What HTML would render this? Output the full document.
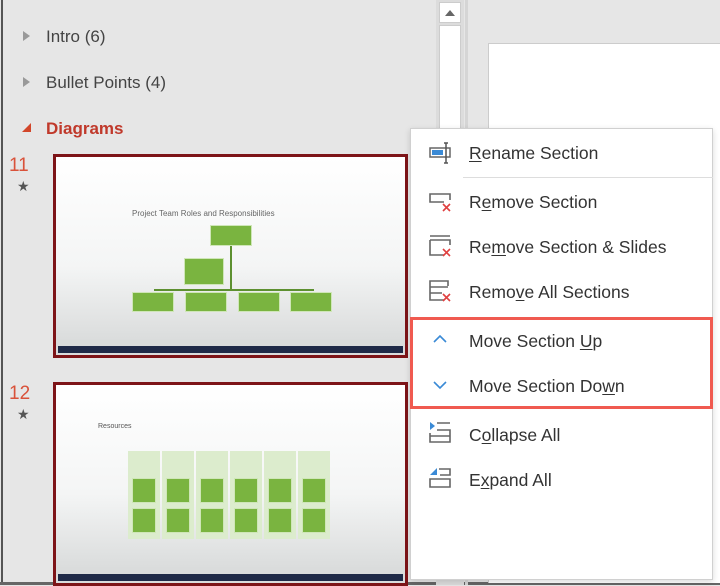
<!DOCTYPE html>
<html><head><style>
*{margin:0;padding:0;box-sizing:border-box}
body{width:720px;height:585px;overflow:hidden;background:#e6e6e6;font-family:"Liberation Sans",sans-serif;position:relative}
.abs{position:absolute}
.sec{position:absolute;left:46px;font-size:17px;color:#444}
.tri{position:absolute;left:23px;width:0;height:0;border-top:5px solid transparent;border-bottom:5px solid transparent;border-left:7px solid #999}
.thumb{position:absolute;left:53px;width:355px;height:204px;border:3px solid #7d1418;background:linear-gradient(#fff 0%,#f4f5f5 55%,#dadcdc 93%)}
.bar{position:absolute;left:2px;right:2px;bottom:2px;height:7px;background:#1f2a48}
.g{position:absolute;background:#7ab440;border:1px solid #cfe6b8}
.menu{position:absolute;left:410px;top:128px;width:303px;height:452px;background:#fff;border:1px solid #d0d0d0;box-shadow:0 2px 6px rgba(0,0,0,.15)}
.it{position:absolute;left:58px;font-size:17.5px;color:#333}
.ic{position:absolute;left:17px}
u{text-decoration:underline;text-underline-offset:2px}
</style></head><body>
<div class="abs" style="left:1px;top:0;width:2px;height:585px;background:#555"></div>
<div class="abs" style="left:0;top:582px;width:720px;height:3px;background:#666"></div>
<div class="abs" style="left:436px;top:0;width:28px;height:585px;background:#dcdcdc"></div>
<div class="abs" style="left:439px;top:2px;width:22px;height:21px;background:#fff;border:1px solid #ccc"></div>
<div class="abs" style="left:445px;top:10px;border-left:5px solid transparent;border-right:5px solid transparent;border-bottom:6px solid #666"></div>
<div class="abs" style="left:439px;top:25px;width:22px;height:555px;background:#fff;border:1px solid #ccc"></div>
<div class="abs" style="left:465px;top:0;width:3px;height:585px;background:#d5d5d5"></div>
<div class="abs" style="left:488px;top:43px;width:232px;height:540px;background:#fff;border-left:1px solid #ccc;border-top:1px solid #ccc"></div>

<div class="tri" style="top:31px"></div><div class="sec" style="top:27px">Intro (6)</div>
<div class="tri" style="top:77px"></div><div class="sec" style="top:73px">Bullet Points (4)</div>
<div class="abs" style="left:22px;top:123px;border-left:9px solid transparent;border-bottom:9px solid #d2462a"></div>
<div class="sec" style="top:119px;color:#c0392b;font-weight:bold">Diagrams</div>

<div class="abs" style="left:9px;top:155px;font-size:19px;color:#d9523a">11</div>
<div class="abs" style="left:17px;top:178px;font-size:14px;color:#555">★</div>
<div class="abs" style="left:9px;top:383px;font-size:19px;color:#d9523a">12</div>
<div class="abs" style="left:17px;top:406px;font-size:14px;color:#555">★</div>

<div class="thumb" style="top:154px">
 <div class="abs" style="left:76px;top:52px;font-size:8px;color:#666">Project Team Roles and Responsibilities</div>
 <div class="g" style="left:154px;top:68px;width:42px;height:21px"></div>
 <div class="g" style="left:128px;top:101px;width:40px;height:27px"></div>
 <div class="abs" style="left:174px;top:89px;width:2px;height:43px;background:#5d9030"></div>
 <div class="abs" style="left:98px;top:132px;width:160px;height:2px;background:#5d9030"></div>
 <div class="g" style="left:76px;top:135px;width:42px;height:20px"></div>
 <div class="g" style="left:129px;top:135px;width:42px;height:20px"></div>
 <div class="g" style="left:182px;top:135px;width:42px;height:20px"></div>
 <div class="g" style="left:234px;top:135px;width:42px;height:20px"></div>
 <div class="bar"></div>
</div>
<div class="thumb" style="top:382px">
 <div class="abs" style="left:42px;top:38px;font-size:7px;color:#555">Resources</div>
 <div class="abs" style="left:72px;top:66px;width:205px;height:88px">
  <div class="abs" style="left:0;top:0;width:32px;height:88px;background:#dceccd"></div><div class="g" style="left:4px;top:27px;width:24px;height:25px"></div><div class="g" style="left:4px;top:57px;width:24px;height:25px"></div>
  <div class="abs" style="left:34px;top:0;width:32px;height:88px;background:#dceccd"></div><div class="g" style="left:38px;top:27px;width:24px;height:25px"></div><div class="g" style="left:38px;top:57px;width:24px;height:25px"></div>
  <div class="abs" style="left:68px;top:0;width:32px;height:88px;background:#dceccd"></div><div class="g" style="left:72px;top:27px;width:24px;height:25px"></div><div class="g" style="left:72px;top:57px;width:24px;height:25px"></div>
  <div class="abs" style="left:102px;top:0;width:32px;height:88px;background:#dceccd"></div><div class="g" style="left:106px;top:27px;width:24px;height:25px"></div><div class="g" style="left:106px;top:57px;width:24px;height:25px"></div>
  <div class="abs" style="left:136px;top:0;width:32px;height:88px;background:#dceccd"></div><div class="g" style="left:140px;top:27px;width:24px;height:25px"></div><div class="g" style="left:140px;top:57px;width:24px;height:25px"></div>
  <div class="abs" style="left:170px;top:0;width:32px;height:88px;background:#dceccd"></div><div class="g" style="left:174px;top:27px;width:24px;height:25px"></div><div class="g" style="left:174px;top:57px;width:24px;height:25px"></div>
 </div>
 <div class="bar"></div>
</div>

<div class="menu">
 <svg class="ic" style="top:11px" width="26" height="26" viewBox="0 0 26 26"><rect x="2" y="8" width="20" height="9" fill="none" stroke="#666" stroke-width="1.5"/><rect x="4" y="10" width="11" height="5" fill="#3a8ad6"/><path d="M16 3h4M18 3v20M16 23h4" stroke="#555" stroke-width="1.5" fill="none"/></svg>
 <div class="it" style="top:14px"><u>R</u>ename Section</div>
 <div class="abs" style="left:52px;top:48px;width:250px;height:1px;background:#ddd"></div>
 <svg class="ic" style="top:60px" width="26" height="26" viewBox="0 0 26 26"><path d="M16 13H2V5h20v6" fill="none" stroke="#666" stroke-width="1.6"/><path d="M15 15l7 7M22 15l-7 7" stroke="#e04040" stroke-width="1.6"/></svg>
 <div class="it" style="top:63px">R<u>e</u>move Section</div>
 <svg class="ic" style="top:104px" width="26" height="28" viewBox="0 0 26 28"><path d="M2 3h20M2 7h20v5M16 22H2V7" fill="none" stroke="#666" stroke-width="1.6"/><path d="M15 16l7 7M22 16l-7 7" stroke="#e04040" stroke-width="1.6"/></svg>
 <div class="it" style="top:108px">Re<u>m</u>ove Section &amp; Slides</div>
 <svg class="ic" style="top:149px" width="26" height="28" viewBox="0 0 26 28"><path d="M16 22H2V3h18v5M2 9h18M2 15h12" fill="none" stroke="#666" stroke-width="1.6"/><path d="M15 16l7 7M22 16l-7 7" stroke="#e04040" stroke-width="1.6"/></svg>
 <div class="it" style="top:153px">Remo<u>v</u>e All Sections</div>
 <svg class="ic" style="top:202px" width="26" height="16" viewBox="0 0 26 16"><path d="M6 11l6-6 6 6" fill="none" stroke="#3a8ad6" stroke-width="1.6"/></svg>
 <div class="it" style="top:202px">Move Section <u>U</u>p</div>
 <svg class="ic" style="top:248px" width="26" height="16" viewBox="0 0 26 16"><path d="M6 5l6 6 6-6" fill="none" stroke="#3a8ad6" stroke-width="1.6"/></svg>
 <div class="it" style="top:247px">Move Section Do<u>w</u>n</div>
 <div class="abs" style="left:-1px;top:188px;width:303px;height:92px;border:3px solid #f05a50"></div>
 <svg class="ic" style="top:291px" width="26" height="28" viewBox="0 0 26 28"><path d="M2 2v8l5-4z" fill="#3a8ad6"/><path d="M9 3h13M9 10h13v6H2v-3M2 16v6h20v-6" fill="none" stroke="#666" stroke-width="1.6"/></svg>
 <div class="it" style="top:296px">C<u>o</u>llapse All</div>
 <svg class="ic" style="top:336px" width="26" height="28" viewBox="0 0 26 28"><path d="M2 10l7-7v7z" fill="#3a8ad6"/><path d="M11 4h11v6H12M2 14h20v8H2z" fill="none" stroke="#666" stroke-width="1.6"/></svg>
 <div class="it" style="top:341px">E<u>x</u>pand All</div>
</div>
</body></html>
